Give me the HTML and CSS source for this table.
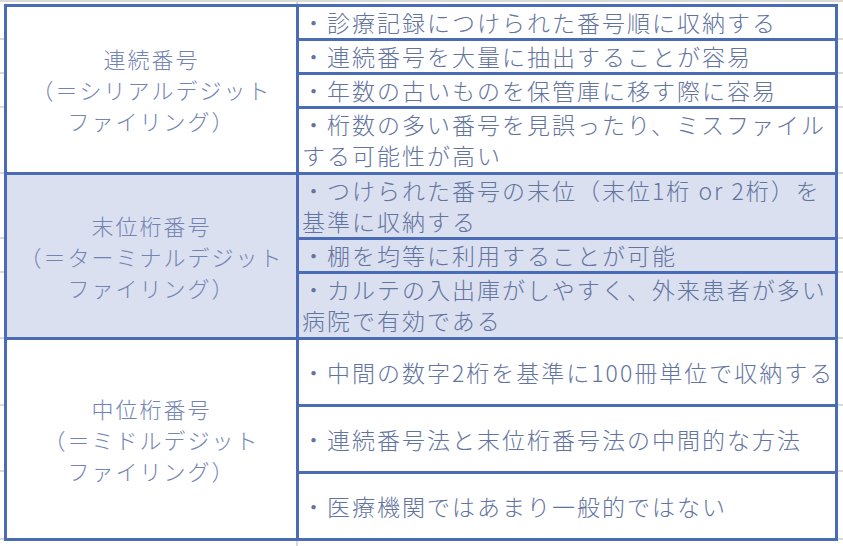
FILE: index.html
```html
<!DOCTYPE html>
<html lang="ja">
<head>
<meta charset="utf-8">
<link rel="stylesheet" href="styles.css">
</head>
<body>
<div class="sheet">
  <div class="tbl">
    <div class="group">
      <div class="head"><div class="label">連続番号<br>（＝シリアルデジット<br>ファイリング）</div></div>
      <div class="items">
        <div class="item">・診療記録につけられた番号順に収納する</div>
        <div class="item">・連続番号を大量に抽出することが容易</div>
        <div class="item">・年数の古いものを保管庫に移す際に容易</div>
        <div class="item tall">・桁数の多い番号を見誤ったり、ミスファイル<br>する可能性が高い</div>
      </div>
    </div>
    <div class="group alt">
      <div class="head"><div class="label">末位桁番号<br>（＝ターミナルデジット<br>ファイリング）</div></div>
      <div class="items">
        <div class="item">・つけられた番号の末位（末位1桁 or 2桁）を<br>基準に収納する</div>
        <div class="item">・棚を均等に利用することが可能</div>
        <div class="item tall">・カルテの入出庫がしやすく、外来患者が多い<br>病院で有効である</div>
      </div>
    </div>
    <div class="group g3">
      <div class="head"><div class="label">中位桁番号<br>（＝ミドルデジット<br>ファイリング）</div></div>
      <div class="items">
        <div class="item">・中間の数字2桁を基準に100冊単位で収納する</div>
        <div class="item">・連続番号法と末位桁番号法の中間的な方法</div>
        <div class="item">・医療機関ではあまり一般的ではない</div>
      </div>
    </div>
  </div>
</div>
</body>
</html>
```
FILE: styles.css
```css
html, body {
  margin: 0;
  padding: 0;
  background: #fff;
}

body {
  font-family: "Noto Sans CJK JP", "Noto Sans", sans-serif;
}

.sheet {
  width: 843px;
  height: 546px;
  box-sizing: border-box;
  padding: 4px 0 0 4px;
  background-color: #fff;
  background-image:
    linear-gradient(#d9d9d9, #d9d9d9),
    linear-gradient(#d9d9d9, #d9d9d9),
    linear-gradient(#d9d9d9, #d9d9d9),
    linear-gradient(#d9d9d9, #d9d9d9),
    linear-gradient(#d9d9d9, #d9d9d9),
    linear-gradient(#d9d9d9, #d9d9d9),
    linear-gradient(#d9d9d9, #d9d9d9),
    linear-gradient(#d9d9d9, #d9d9d9),
    linear-gradient(#d9d9d9, #d9d9d9),
    linear-gradient(#d9d9d9, #d9d9d9),
    linear-gradient(#d9d9d9, #d9d9d9),
    linear-gradient(#d9d9d9, #d9d9d9);
  background-repeat: no-repeat;
  background-size:
    100% 2px, 100% 2px, 100% 2px, 100% 2px, 100% 2px,
    100% 2px, 100% 2px, 100% 2px, 100% 2px, 100% 2px,
    2px 100%, 100% 2px;
  background-position:
    0 38px, 0 72px, 0 106px, 0 172px, 0 237px,
    0 271px, 0 337px, 0 404px, 0 470px, 0 538px,
    296px 0, 0 0;
}

.tbl {
  width: 834px;
  box-sizing: border-box;
  border: 3px solid #4a6cb7;
  background: #fff;
}

.group {
  display: flex;
  border-bottom: 3px solid #4a6cb7;
}

.group:last-child {
  border-bottom: none;
}

.alt {
  background: #dae0f0;
}

.head {
  width: 289px;
  flex: none;
  border-right: 3px solid #4a6cb7;
  display: flex;
  align-items: center;
  justify-content: center;
}

.label {
  text-align: center;
  font-size: 22px;
  font-weight: 300;
  line-height: 31px;
  letter-spacing: 2px;
  white-space: nowrap;
  color: #7384b4;
}

.items {
  flex: 1;
  display: flex;
  flex-direction: column;
  min-width: 0;
}

.item {
  border-bottom: 3px solid #4a6cb7;
  padding-left: 3px;
  font-size: 23px;
  font-weight: 300;
  line-height: 31px;
  letter-spacing: 2px;
  white-space: nowrap;
  color: #63749f;
}

.item:last-child {
  border-bottom: none;
}

.tall {
  padding-bottom: 1px;
}

.g3 .items {
  height: 198px;
}

.g3 .item {
  flex: 1;
  display: flex;
  align-items: center;
}
```
